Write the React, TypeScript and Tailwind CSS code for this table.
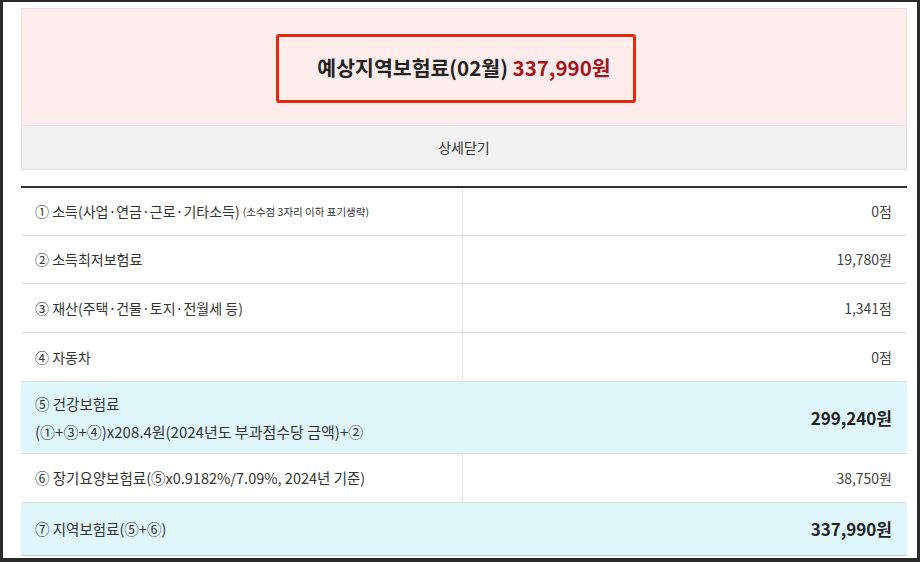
type Row = {
  label: React.ReactNode;
  value: string;
  h: string;
  cyan?: boolean;
  strong?: boolean;
};

const rows: Row[] = [
  {
    label: (
      <>
        ① 소득(사업·연금·근로·기타소득)
        <span className="ml-[3px] text-[10.5px]">(소수점 3자리 이하 표기생략)</span>
      </>
    ),
    value: "0점",
    h: "h-[48px]",
  },
  { label: "② 소득최저보험료", value: "19,780원", h: "h-[48px]" },
  { label: "③ 재산(주택·건물·토지·전월세 등)", value: "1,341점", h: "h-[49px]" },
  { label: "④ 자동차", value: "0점", h: "h-[49px]" },
  {
    label: (
      <div className="text-[14.5px] leading-[28px]">
        <div>⑤ 건강보험료</div>
        <div className="text-[15px]">(①+③+④)x208.4원(2024년도 부과점수당 금액)+②</div>
      </div>
    ),
    value: "299,240원",
    h: "h-[72px]",
    cyan: true,
    strong: true,
  },
  {
    label: <span className="text-[14.5px]">⑥ 장기요양보험료(⑤x0.9182%/7.09%, 2024년 기준)</span>,
    value: "38,750원",
    h: "h-[49px]",
  },
  {
    label: <span className="text-[14.5px]">⑦ 지역보험료(⑤+⑥)</span>,
    value: "337,990원",
    h: "h-[53px]",
    cyan: true,
    strong: true,
  },
];

export default function App() {
  return (
    <div
      className="flex h-[562px] w-[920px] flex-col overflow-hidden border-b-[4px] border-l-[3px] border-r-[3px] border-t-[2px] border-[#2a2a2a] bg-white pl-[18px] pr-[10px] pt-[6px] text-[#333]"
      style={{ fontFamily: '"Noto Sans CJK KR", "Noto Sans", sans-serif' }}
    >
      {/* summary */}
      <div className="relative flex h-[118px] items-center justify-center border border-[#f0dcdd] bg-[#ffecec]">
        <div className="text-[20.5px] font-bold text-[#222]">
          예상지역보험료(02월) <span className="font-semibold text-[#a8141c]">337,990원</span>
        </div>
        <div className="absolute left-[254px] top-[25px] h-[69px] w-[360px] rounded-[3px] border-[3px] border-[#e4290f]" />
      </div>
      <div className="flex h-[44px] items-center justify-center border-x border-b border-[#dcdcdc] bg-[#f2f2f2] text-[14px] text-[#333]">
        상세닫기
      </div>

      {/* details */}
      <div className="mt-[16px] border-t-2 border-[#333]">
        {rows.map((r, i) => (
          <div
            key={i}
            className={`grid grid-cols-[442px_1fr] border-b ${r.h} ${
              r.cyan ? "bg-[#dff6fa]" : "bg-white"
            } ${i === rows.length - 1 ? "border-[#c6c6c6]" : "border-[#dedede]"}`}
          >
            <div
              className={`flex items-center border-r pl-[14px] text-[14px] ${
                r.cyan ? "border-[#dff6fa]" : "border-[#e6e6e6]"
              }`}
            >
              {typeof r.label === "string" ? <span>{r.label}</span> : r.label}
            </div>
            <div
              className={`flex items-center justify-end pr-[15px] ${
                r.strong ? "text-[17px] font-bold text-[#222]" : "text-[14px] text-[#444]"
              }`}
            >
              {r.value}
            </div>
          </div>
        ))}
      </div>
    </div>
  );
}
